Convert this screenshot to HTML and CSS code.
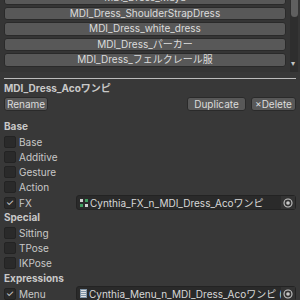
FILE: index.html
```html
<!DOCTYPE html>
<html lang="en">
<head>
<meta charset="UTF-8" />
<title>Outfit Editor</title>
<link rel="stylesheet" href="styles.css">
</head>
<body>
<div class="list">
  <div class="items">
    <button class="item">MDI_Dress_Maya</button>
    <button class="item">MDI_Dress_ShoulderStrapDress</button>
    <button class="item">MDI_Dress_white_dress</button>
    <button class="item">MDI_Dress_パーカー</button>
    <button class="item">MDI_Dress_フェルクレール服</button>
  </div>
  <div class="scrollbar">
    <div class="thumb"></div>
    <div class="arrow">&#9662;</div>
  </div>
</div>
<div class="divider"></div>

<div class="title">MDI_Dress_Acoワンピ</div>
<div class="actions">
  <button class="btn">Rename</button>
  <span class="spacer"></span>
  <button class="btn dup">Duplicate</button>
  <button class="btn del">×Delete</button>
</div>

<div class="section first">Base</div>
<div class="row"><span class="check"></span>Base</div>
<div class="row"><span class="check"></span>Additive</div>
<div class="row"><span class="check"></span>Gesture</div>
<div class="row"><span class="check"></span>Action</div>
<div class="row">
  <span class="check on">✓</span><span class="label">FX</span>
  <div class="field">
    <svg class="ico" width="8" height="8" viewBox="0 0 8 8">
      <rect x="0" y="0" width="3" height="3" fill="#d0d0d0"/>
      <rect x="5" y="5" width="3" height="3" fill="#d0d0d0"/>
      <rect x="5" y="0" width="3" height="3" fill="#3f9f5f"/>
      <rect x="0" y="5" width="3" height="3" fill="#3f9f5f"/>
    </svg>
    <span class="fname">Cynthia_FX_n_MDI_Dress_Acoワンピ</span>
    <span class="pick"><svg width="10" height="10" viewBox="0 0 10 10"><circle cx="5" cy="5" r="4" fill="none" stroke="#c8c8c8" stroke-width="1.1"/><circle cx="5" cy="5" r="1.8" fill="#c8c8c8"/></svg></span>
  </div>
</div>

<div class="section">Special</div>
<div class="row"><span class="check"></span>Sitting</div>
<div class="row"><span class="check"></span>TPose</div>
<div class="row"><span class="check"></span>IKPose</div>

<div class="section">Expressions</div>
<div class="row">
  <span class="check on">✓</span><span class="label">Menu</span>
  <div class="field">
    <svg class="ico" width="7" height="9" viewBox="0 0 7 9">
      <rect x="0" y="0" width="7" height="9" fill="#7f93a6"/>
      <rect x="1" y="1" width="5" height="1" fill="#e0e0e0"/>
      <rect x="1" y="3" width="5" height="1" fill="#e0e0e0"/>
      <rect x="1" y="5" width="5" height="1" fill="#e0e0e0"/>
      <rect x="1" y="7" width="5" height="1" fill="#e0e0e0"/>
    </svg>
    <span class="fname">Cynthia_Menu_n_MDI_Dress_Acoワンピ (VRCExpressionsMenu)</span>
    <span class="pick"><svg width="10" height="10" viewBox="0 0 10 10"><circle cx="5" cy="5" r="4" fill="none" stroke="#c8c8c8" stroke-width="1.1"/><circle cx="5" cy="5" r="1.8" fill="#c8c8c8"/></svg></span>
  </div>
</div>
</body>
</html>
```

FILE: styles.css
```css
body {
  margin: 0;
  background: #383838;
  color: #c8c8c8;
  font-family: Inter, "Noto Sans CJK JP", sans-serif;
  font-size: 10px;
  width: 300px;
  height: 300px;
  overflow: hidden;
}
.list {
  display: flex;
  height: 72px;
  background: #353535;
}
.items {
  flex: 1;
  display: flex;
  flex-direction: column;
  gap: 2px;
  padding: 0 0 0 4px;
  margin-top: -9px;
}
.item {
  height: 13.5px;
  flex: none;
  margin: 0 4px 0 0;
  padding: 0;
  background: #585858;
  border: 1px solid #2a2a2a;
  border-radius: 3px;
  color: #dcdcdc;
  font-family: inherit;
  font-size: 10px;
  line-height: 11px;
  text-align: center;
}
.scrollbar {
  width: 8px;
  position: relative;
  background: #2e2e2e;
  margin-right: 2px;
}
.thumb {
  width: 7px;
  height: 17px;
  margin: 0 auto;
  background: #5f5f5f;
  border-radius: 0 0 4px 4px;
}
.arrow {
  position: absolute;
  top: 58px;
  left: 1px;
  color: #c4c4c4;
  font-size: 8px;
}
.divider {
  height: 1px;
  background: #bcbcbc;
  margin: 6px 4px 2px 4px;
}
.title {
  font-weight: bold;
  padding: 0 4px;
  height: 15px;
  line-height: 15px;
}
.actions {
  display: flex;
  gap: 5px;
  padding: 1px 4px 0 4px;
  height: 15px;
}
.spacer {
  flex: 1;
}
.btn {
  height: 14px;
  margin: 0;
  padding: 0;
  background: #585858;
  border: 1px solid #2a2a2a;
  border-radius: 3px;
  color: #dcdcdc;
  font-family: inherit;
  font-size: 10px;
  line-height: 12px;
}
.btn:first-child {
  width: 44px;
}
.dup {
  width: 59px;
}
.del {
  width: 45px;
}
.section {
  font-weight: bold;
  padding: 0 4px;
  height: 15.2px;
  line-height: 15px;
}
.section.first {
  margin-top: 7px;
}
.row {
  display: flex;
  align-items: center;
  height: 15.2px;
  padding: 0 4px;
}
.check {
  width: 10px;
  height: 10px;
  margin-right: 3px;
  background: #2a2a2a;
  border: 1px solid #232323;
  border-radius: 2px;
  color: #e0e0e0;
  font-size: 9px;
  line-height: 10px;
  text-align: center;
}
.label {
  width: 57px;
}
.field {
  flex: 1;
  display: flex;
  align-items: center;
  height: 13px;
  background: #2a2a2a;
  border: 1px solid #232323;
  border-radius: 3px;
  min-width: 0;
  color: #d8d8d8;
}
.ico {
  margin: 0 2px 0 3px;
  flex: none;
}
.fname {
  flex: 1;
  white-space: nowrap;
  overflow: hidden;
}
.pick {
  width: 14px;
  height: 13px;
  display: flex;
  align-items: center;
  justify-content: center;
  background: #333333;
  flex: none;
}
```
